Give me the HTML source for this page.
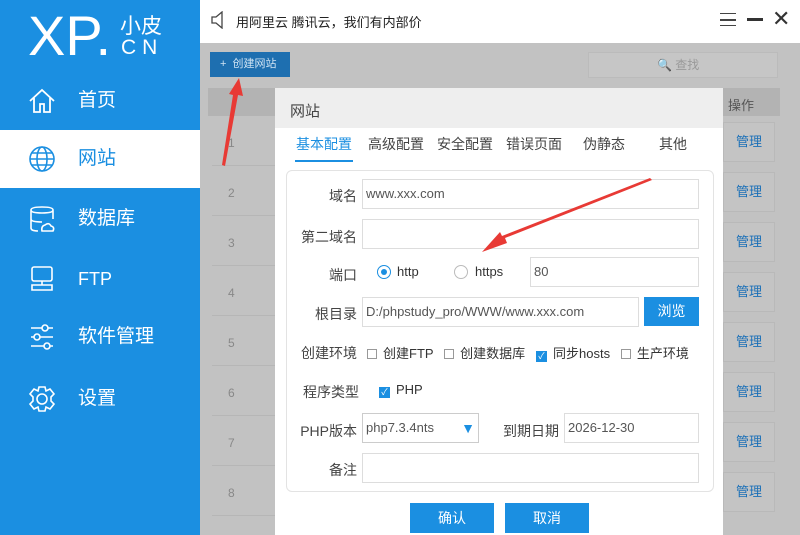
<!DOCTYPE html>
<html><head><meta charset="utf-8"><style>
*{margin:0;padding:0;box-sizing:border-box}
body{width:800px;height:535px;overflow:hidden;position:relative;font-family:"Liberation Sans","Noto Sans CJK SC",sans-serif;background:#c2c2c2}
.abs{position:absolute}
#side{left:0;top:0;width:200px;height:535px;background:#1b8fe1;color:#fff}
.nav{position:absolute;left:0;width:200px;height:58px;font-size:19px;line-height:58px}
.nav span{position:absolute;left:78px}
.nav svg{position:absolute;left:28px;top:15px}
#top{left:200px;top:0;width:600px;height:43px;background:#fff;font-size:13px;color:#222}
.row{position:absolute;left:212px;width:508px;height:46px;border-bottom:1px solid #b6b6b6;color:#888;font-size:12px}
.row b{position:absolute;left:16px;top:16px;font-weight:normal}
.mg{position:absolute;left:723px;width:52px;height:40px;border:1px solid #b9b9b9;color:#1b70b8;font-size:13px;line-height:38px;text-align:center;background:#c4c4c4}
#modal{left:275px;top:88px;width:448px;height:447px;background:#fff}
.lbl{position:absolute;font-size:14px;color:#444;text-align:right;width:70px}
.inp{position:absolute;border:1px solid #ddd;height:30px;font-size:13px;color:#555;line-height:28px;padding-left:3px;background:#fff}
.tab{position:absolute;top:46px;font-size:14px;color:#444}
.cb{display:inline-block;width:10px;height:10px;border:1px solid #999;vertical-align:-1px;margin-right:6px}
.cbo{display:inline-block;width:11px;height:11px;background:#1b8fe1;vertical-align:-1px;margin-right:6px;color:#fff;font-size:9px;line-height:11px;text-align:center}
.btn{position:absolute;top:415px;width:84px;height:30px;background:#1b8fe1;color:#fff;font-size:14px;line-height:30px;text-align:center}
</style></head><body>
<div id="side" class="abs">
 <div class="abs" style="left:28px;top:8px;font-size:56px;line-height:56px;color:#fff">XP.</div>
 <div class="abs" style="left:120px;top:10px;font-size:21px">小皮</div>
 <div class="abs" style="left:121px;top:36px;font-size:21px;letter-spacing:6px">CN</div>
 <div class="nav" style="top:72px"><svg width="28" height="28" viewBox="0 0 28 28" fill="none" stroke="#fff" stroke-width="1.8"><path d="M2 14 L14 3 L26 14 M6 11 V25 H12 V17 H16 V25 H22 V11"/></svg><span>首页</span></div>
 <div class="nav" style="top:130px;background:#fff;color:#1b8fe1"><svg width="28" height="28" viewBox="0 0 28 28" fill="none" stroke="#1b8fe1" stroke-width="1.6"><circle cx="14" cy="14" r="12"/><ellipse cx="14" cy="14" rx="5" ry="12"/><path d="M2 14H26M4 8H24M4 20H24"/></svg><span>网站</span></div>
 <div class="nav" style="top:190px"><svg width="28" height="28" viewBox="0 0 28 28" fill="none" stroke="#fff" stroke-width="1.6"><path d="M3 5 Q3 2 14 2 Q25 2 25 5 V14 M3 5 V23 Q3 26 10 26 M3 5 Q3 8 14 8 Q25 8 25 5 M3 14 Q3 17 14 17"/><path d="M14 26 H25 Q27 22 23 21 Q21 17 17 20 Q13 21 14 26Z"/></svg><span>数据库</span></div>
 <div class="nav" style="top:250px"><svg width="28" height="28" viewBox="0 0 28 28" fill="none" stroke="#fff" stroke-width="1.6"><rect x="4" y="2" width="20" height="14" rx="2"/><path d="M14 16 V20 M4 20 H24 V25 H4Z"/></svg><span style="font-size:18px">FTP</span></div>
 <div class="nav" style="top:308px"><svg width="28" height="28" viewBox="0 0 28 28" fill="none" stroke="#fff" stroke-width="1.6"><path d="M3 5H14M20 5H25M3 14H6M12 14H25M3 23H16M22 23H25"/><circle cx="17" cy="5" r="3"/><circle cx="9" cy="14" r="3"/><circle cx="19" cy="23" r="3"/></svg><span>软件管理</span></div>
 <div class="nav" style="top:370px"><svg width="28" height="28" viewBox="0 0 28 28" fill="none" stroke="#fff" stroke-width="1.6"><path d="M11 2H17L18 6L22 4L26 9L23 12V16L26 19L22 24L18 22L17 26H11L10 22L6 24L2 19L5 16V12L2 9L6 4L10 6Z"/><circle cx="14" cy="14" r="5"/></svg><span>设置</span></div>
</div>
<div id="top" class="abs">
 <svg class="abs" style="left:11px;top:11px" width="16" height="18" viewBox="0 0 16 18" fill="none" stroke="#444" stroke-width="1.3"><path d="M1 6H5L11 1V17L5 12H1Z"/></svg>
 <div class="abs" style="left:36px;top:12px">用阿里云 腾讯云，我们有内部价</div>
 <div class="abs" style="left:520px;top:13px;width:16px;height:13px;border-top:1.5px solid #444;border-bottom:1.5px solid #444"></div>
 <div class="abs" style="left:520px;top:19px;width:16px;height:1.5px;background:#444"></div>
 <div class="abs" style="left:547px;top:18px;width:16px;height:3px;background:#333"></div>
 <div class="abs" style="left:572px;top:6px;font-size:22px;color:#333">✕</div>
</div>
<div class="abs" style="left:210px;top:52px;width:80px;height:25px;background:#1e6fb0;color:#cfe3f3;font-size:11px;line-height:25px;padding-left:10px">+ &nbsp;创建网站</div>
<div class="abs" style="left:588px;top:52px;width:190px;height:26px;background:#c6c6c6;border:1px solid #bbb;color:#999;font-size:12px;line-height:24px;padding-left:68px">🔍 查找</div>
<div class="abs" style="left:208px;top:88px;width:572px;height:28px;background:#b3b3b3"></div>
<div class="abs" style="left:728px;top:95px;font-size:13px;color:#555">操作</div>
<div class="row" style="top:120px"><b>1</b></div>
<div class="row" style="top:170px"><b>2</b></div>
<div class="row" style="top:220px"><b>3</b></div>
<div class="row" style="top:270px"><b>4</b></div>
<div class="row" style="top:320px"><b>5</b></div>
<div class="row" style="top:370px"><b>6</b></div>
<div class="row" style="top:420px"><b>7</b></div>
<div class="row" style="top:470px"><b>8</b></div>
<div class="mg" style="top:122px">管理</div><div class="mg" style="top:172px">管理</div><div class="mg" style="top:222px">管理</div><div class="mg" style="top:272px">管理</div><div class="mg" style="top:322px">管理</div><div class="mg" style="top:372px">管理</div><div class="mg" style="top:422px">管理</div><div class="mg" style="top:472px">管理</div>
<div id="modal" class="abs">
 <div class="abs" style="left:0;top:0;width:448px;height:40px;background:#eeeeee;font-size:15px;color:#444;padding:12px 0 0 15px">网站</div>
 <div class="tab" style="color:#1b8fe1;border-bottom:2px solid #1b8fe1;padding:0 0 6px 0;width:58px;left:20px;text-align:center">基本配置</div>
 <div class="tab" style="left:93px">高级配置</div>
 <div class="tab" style="left:162px">安全配置</div>
 <div class="tab" style="left:231px">错误页面</div>
 <div class="tab" style="left:308px">伪静态</div>
 <div class="tab" style="left:384px">其他</div>
 <div class="abs" style="left:11px;top:82px;width:428px;height:322px;border:1px solid #e3e3e3;border-radius:6px"></div>
 <div class="lbl" style="left:12px;top:98px">域名</div>
 <div class="inp" style="left:87px;top:91px;width:337px">www.xxx.com</div>
 <div class="lbl" style="left:12px;top:139px">第二域名</div>
 <div class="inp" style="left:87px;top:131px;width:337px"></div>
 <div class="lbl" style="left:12px;top:177px">端口</div>
 <div class="abs" style="left:102px;top:177px;width:14px;height:14px;border:1px solid #1b8fe1;border-radius:50%"><div style="margin:3px;width:6px;height:6px;border-radius:50%;background:#1b8fe1"></div></div>
 <div class="abs" style="left:122px;top:176px;font-size:13px;color:#333">http</div>
 <div class="abs" style="left:179px;top:177px;width:14px;height:14px;border:1px solid #bbb;border-radius:50%"></div>
 <div class="abs" style="left:200px;top:176px;font-size:13px;color:#333">https</div>
 <div class="inp" style="left:255px;top:169px;width:169px">80</div>
 <div class="lbl" style="left:12px;top:216px">根目录</div>
 <div class="inp" style="left:87px;top:209px;width:277px">D:/phpstudy_pro/WWW/www.xxx.com</div>
 <div class="abs" style="left:369px;top:209px;width:55px;height:29px;background:#1b8fe1;color:#fff;font-size:14px;line-height:29px;text-align:center">浏览</div>
 <div class="lbl" style="left:2px;top:255px;width:80px">创建环境</div>
 <div class="abs" style="left:92px;top:255px;font-size:13px;color:#333;white-space:nowrap"><span class="cb"></span>创建FTP &nbsp;&nbsp;<span class="cb"></span>创建数据库 &nbsp;&nbsp;<span class="cbo">✓</span>同步hosts &nbsp;&nbsp;<span class="cb"></span>生产环境</div>
 <div class="lbl" style="left:2px;top:294px;width:82px">程序类型</div>
 <div class="abs" style="left:104px;top:294px;font-size:13px;color:#333"><span class="cbo">✓</span>PHP</div>
 <div class="lbl" style="left:12px;top:333px">PHP版本</div>
 <div class="inp" style="left:87px;top:325px;width:117px;border-color:#ccc">php7.3.4nts<span style="position:absolute;right:3px;top:0;color:#1b8fe1;font-size:14px">▼</span></div>
 <div class="abs" style="left:228px;top:333px;font-size:14px;color:#444">到期日期</div>
 <div class="inp" style="left:289px;top:325px;width:135px">2026-12-30</div>
 <div class="lbl" style="left:12px;top:372px">备注</div>
 <div class="inp" style="left:87px;top:365px;width:337px"></div>
 <div class="btn" style="left:135px">确认</div>
 <div class="btn" style="left:230px">取消</div>
</div>
<svg class="abs" style="left:0;top:0" width="800" height="535">
 <path d="M222 165 L233 95 L229 94 L239 78 L243 96 L238 95 L225 166Z" fill="#e83a35"/>
 <path d="M652 180 L505 238 L507 243 L482 252 L500 232 L502 236 L650 178Z" fill="#e83a35"/>
</svg>
</body></html>
